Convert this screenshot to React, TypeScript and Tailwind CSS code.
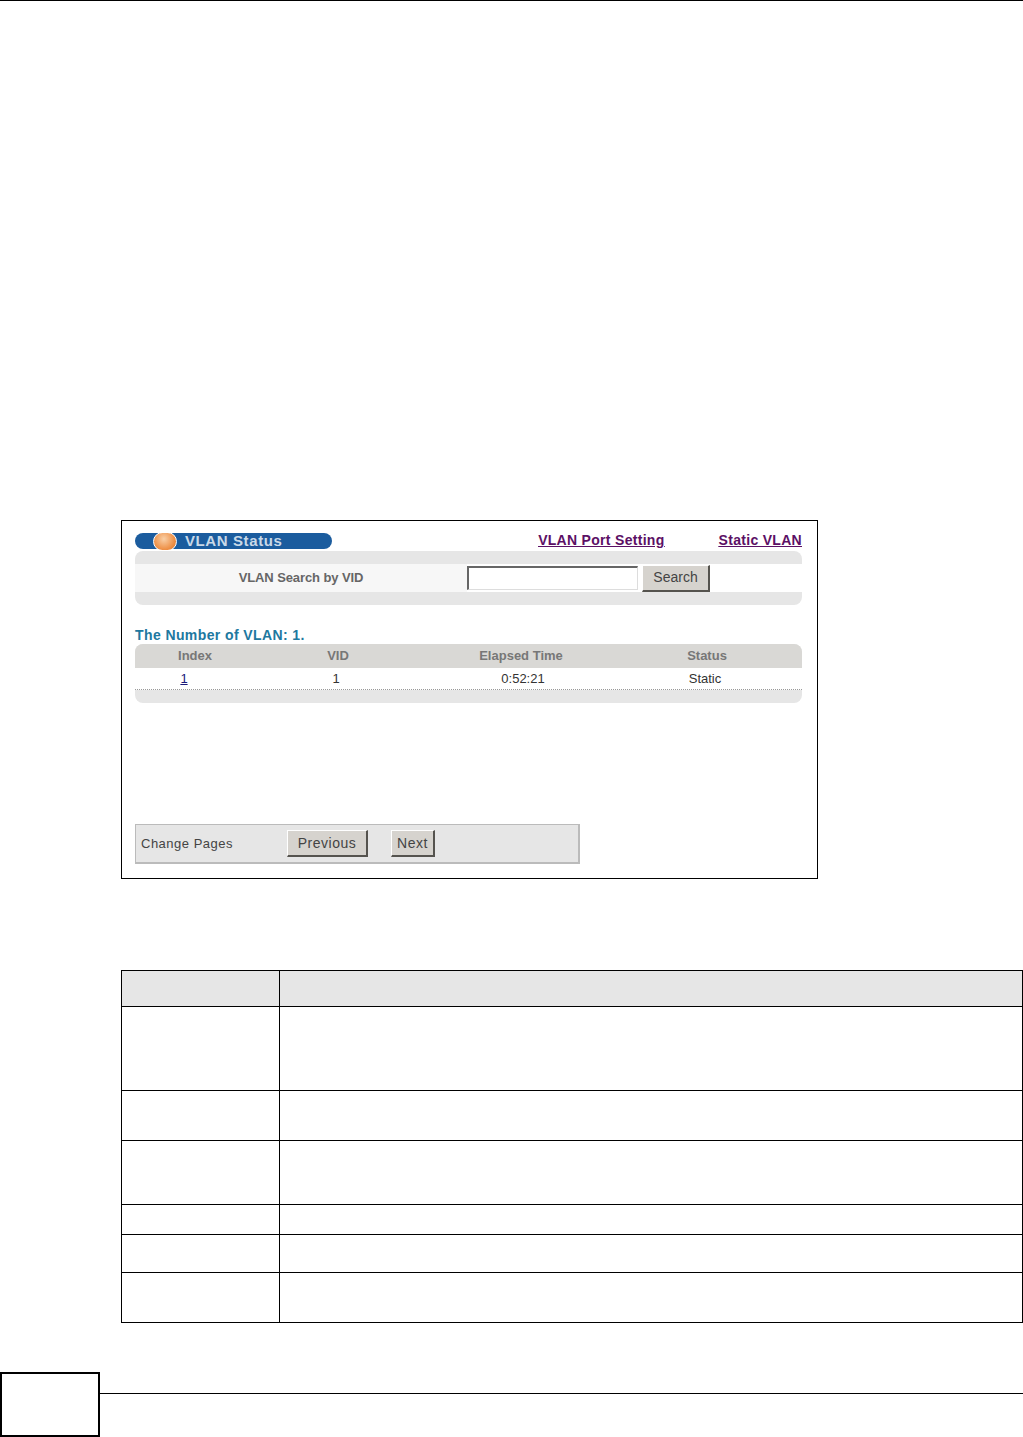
const rows = [
  'h-[36px] bg-[#e6e6e6]',
  'h-[84px]',
  'h-[50px]',
  'h-[64px]',
  'h-[30px]',
  'h-[38px]',
  'h-[50px]',
];

const XpButton = ({ label, width }: { label: string; width: string }) => (
  <button
    className={`${width} h-[27px] border-t border-l border-t-white border-l-white border-r-2 border-b-2 border-r-[#55534e] border-b-[#55534e] bg-[#d6d3ce] text-[14px] text-[#444]`}
  >
    {label}
  </button>
);

const VlanPanel = () => (
  <div className="ml-[121px] flex h-[359px] w-[697px] flex-col border border-black px-[13px] pt-[12px]">
    <div className="flex h-[18px] w-[667px] items-start justify-between">
      <div className="relative flex h-[16px] w-[197px] items-center rounded-full bg-[#1b5c9e] pb-[2px] pl-[50px] text-[15px] font-bold leading-none tracking-[0.6px] text-[#c9d9e8]">
        <span className="absolute left-[18px] top-[-1px] h-[19px] w-[24px] rounded-full border border-white bg-[radial-gradient(circle_at_45%_35%,#f9cfa6,#ee8f45_65%,#d9742c)]" />
        VLAN Status
      </div>
      <div className="flex text-[14px] font-bold leading-none tracking-[0.3px] text-[#5c1065] underline">
        <a className="mr-[54px]">VLAN Port Setting</a>
        <a>Static VLAN</a>
      </div>
    </div>

    <div className="flex h-[54px] w-[667px] flex-col justify-center rounded-[8px] bg-[#e6e6e6]">
      <div className="flex h-[28px] items-center bg-white">
        <span className="flex h-full w-[332px] items-center justify-center bg-[#f7f7f7] text-[13px] font-bold tracking-[-0.1px] text-[#666]">
          VLAN Search by VID
        </span>
        <input className="h-[24px] w-[171px] border-t-2 border-l-2 border-r border-b border-t-[#666] border-l-[#666] border-r-[#ddd] border-b-[#ddd] bg-white" />
        <div className="ml-[4px]">
          <XpButton label="Search" width="w-[68px]" />
        </div>
      </div>
    </div>

    <h2 className="mt-[22px] text-[14px] font-bold leading-[17px] tracking-[0.4px] text-[#20789f]">
      The Number of VLAN: 1.
    </h2>

    <div className="w-[667px] overflow-hidden rounded-[8px] bg-[#e6e6e6]">
      <div className="grid h-[24px] grid-cols-[120px_166px_200px_172px] items-center bg-[#d9d8d5] text-center text-[13px] font-bold text-[#777]">
        <span>Index</span>
        <span>VID</span>
        <span>Elapsed Time</span>
        <span>Status</span>
      </div>
      <div className="grid h-[22px] grid-cols-[98px_206px_168px_196px] items-center border-b border-dotted border-b-[#999] bg-white text-center text-[13px] text-[#333]">
        <a className="text-[#1a1a7a] underline">1</a>
        <span>1</span>
        <span>0:52:21</span>
        <span>Static</span>
      </div>
      <div className="h-[13px]" />
    </div>

    <div className="mt-[121px] flex h-[40px] w-[445px] items-center border border-[#bbb] border-b-2 border-r-2 bg-[#e6e6e6] pl-[5px] text-[13px] tracking-[0.5px] text-[#444]">
      <span className="w-[146px]">Change Pages</span>
      <XpButton label="Previous" width="w-[81px]" />
      <div className="ml-[23px]">
        <XpButton label="Next" width="w-[44px]" />
      </div>
    </div>
  </div>
);

const App = () => {
  return (
    <div className="flex h-[1437px] w-[1023px] flex-col overflow-hidden bg-white font-['Liberation_Sans',Arial,sans-serif]">
      <div className="h-[1px] bg-black" />
      <div className="h-[519px]" />
      <VlanPanel />

      <table className="ml-[121px] mt-[91px] w-[902px] table-fixed border-collapse">
        <colgroup>
          <col className="w-[158px]" />
          <col />
        </colgroup>
        <tbody>
          {rows.map((row, i) => (
            <tr key={i} className={row}>
              <td className="border border-black" />
              <td className="border border-black" />
            </tr>
          ))}
        </tbody>
      </table>

      <div className="mt-[49px] flex items-start">
        <div className="h-[65px] w-[100px] border-2 border-black" />
        <div className="mt-[21px] h-[1px] flex-1 bg-black" />
      </div>
    </div>
  );
};

export default App;
